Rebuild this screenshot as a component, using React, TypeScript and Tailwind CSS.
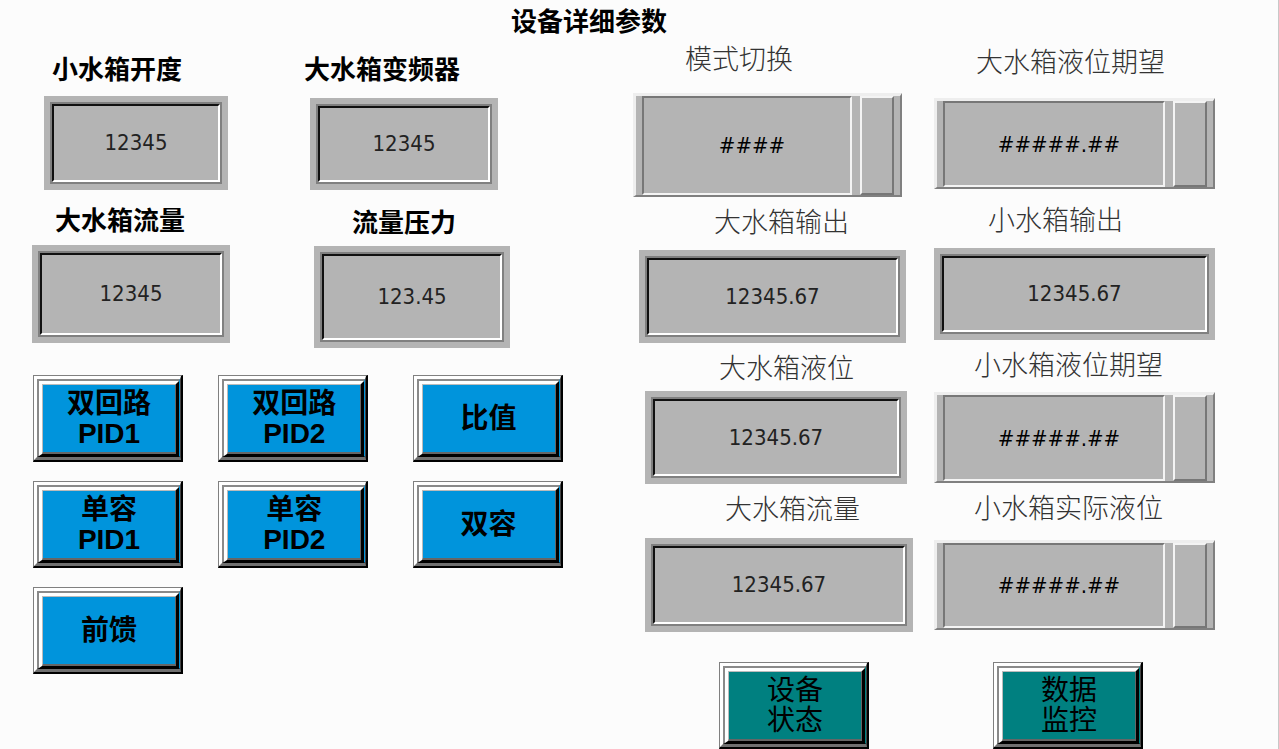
import { useId } from "react";

type FieldProps = {
  label: string;
  value: string;
  labelClass: string;
  boxClass: string;
};

const boldLabel = "text-[26px] font-bold text-black";
const lightLabel = "text-[27px] font-light text-[#333]";

function Display({ label, value, labelClass, boxClass }: FieldProps) {
  const id = useId();
  return (
    <div className="flex flex-col">
      <label htmlFor={id} className={`block h-8 whitespace-nowrap leading-8 ${labelClass}`}>
        {label}
      </label>
      <div className={`flex bg-[#b4b4b4] p-[6px] ${boxClass}`}>
        <div className="flex flex-1 border-2 border-[#808080]">
          <output
            id={id}
            className="flex flex-1 items-center justify-center border-2 border-t-[#111] border-r-white border-b-white border-l-[#111] text-[22px] leading-none text-[#222]"
          >
            {value}
          </output>
        </div>
      </div>
    </div>
  );
}

function Entry({ label, value, labelClass, boxClass }: FieldProps) {
  const id = useId();
  return (
    <div className="flex flex-col">
      <label htmlFor={id} className={`block h-8 whitespace-nowrap leading-8 ${labelClass}`}>
        {label}
      </label>
      <div
        className={`flex border-t-3 border-r-2 border-b-2 border-l-3 border-t-[#eee] border-r-[#808080] border-b-[#808080] border-l-[#eee] bg-[#b4b4b4] px-[6px] ${boxClass}`}
      >
        <input
          id={id}
          type="text"
          defaultValue={value}
          className="w-0 min-w-0 flex-1 border-2 border-t-[#777] border-r-[#f4f4f4] border-b-[#f4f4f4] border-l-[#777] bg-transparent pl-[10px] text-center text-[22px] text-black outline-none"
        />
        <button
          type="button"
          aria-label={label}
          className="ml-2 w-[34px] shrink-0 border-2 border-t-[#f4f4f4] border-r-[#777] border-b-[#777] border-l-[#f4f4f4]"
        />
      </div>
    </div>
  );
}

type PushButtonProps = { lines: string[]; tone: "blue" | "teal" };

const tones = {
  blue: { face: "bg-[#0094dc] font-bold", edge: "border-r-[#0094dc]" },
  teal: { face: "bg-[#008080] font-normal", edge: "border-r-[#008080]" },
};

function PushButton({ lines, tone }: PushButtonProps) {
  const { face, edge } = tones[tone];
  return (
    <button
      type="button"
      className="flex h-[87px] w-[150px] border-t border-r-2 border-b-2 border-l border-t-[#808080] border-r-black border-b-black border-l-[#808080]"
    >
      <span className="flex flex-1 self-stretch border-t-3 border-r border-b-3 border-l-3 border-t-white border-r-[#444] border-b-[#707070] border-l-white">
        <span className={`flex flex-1 border-t-2 border-r border-b border-l-2 border-t-[#8a8a8a] border-b-black border-l-[#8a8a8a] ${edge}`}>
          <span className="flex flex-1 border-t-3 border-r-3 border-b-2 border-l-3 border-t-white border-r-black border-b-black border-l-white">
            <span
              className={`flex flex-1 flex-col items-center justify-center border-t border-r border-b-2 border-l border-t-[#bbb] border-r-[#666] border-b-[#666] border-l-[#bbb] text-[28px] text-black ${face}`}
            >
              {lines.map((line) => (
                <span key={line} className="block h-[30px] whitespace-nowrap leading-[30px]">
                  {line}
                </span>
              ))}
            </span>
          </span>
        </span>
      </span>
    </button>
  );
}

const modes = [
  ["双回路", "PID1"],
  ["双回路", "PID2"],
  ["比值"],
  ["单容", "PID1"],
  ["单容", "PID2"],
  ["双容"],
  ["前馈"],
];

export default function App() {
  return (
    <main className="min-h-screen border-r border-[#c8c8c8] bg-[#fcfcfc] pr-[63px] pl-8 font-['DejaVu_Sans_Condensed','Noto_Sans_CJK_SC',sans-serif]">
      <h1 className="pl-[40.5%] text-[26px] leading-[44px] font-bold text-black">设备详细参数</h1>

      <div className="grid grid-cols-[minmax(0,601fr)_minmax(0,582fr)]">
        <section>
          <div className="grid grid-cols-[minmax(0,272fr)_minmax(0,329fr)] pt-[10px]">
            <div className="flex flex-col gap-[15px]">
              <Display label="小水箱开度" value="12345" labelClass={`pl-5 ${boldLabel}`} boxClass="mt-[10px] mr-[76px] ml-3 h-[94px]" />
              <Display label="大水箱流量" value="12345" labelClass={`pl-[23px] ${boldLabel}`} boxClass="mt-2 mr-[74px] h-[98px]" />
            </div>
            <div className="flex flex-col gap-[17px]">
              <Display label="大水箱变频器" value="12345" labelClass={boldLabel} boxClass="mt-3 mr-[135px] ml-[6px] h-[92px]" />
              <Display label="流量压力" value="123.45" labelClass={`pl-12 ${boldLabel}`} boxClass="mt-[7px] mr-[123px] ml-[10px] h-[102px]" />
            </div>
          </div>

          <div className="mt-[27px] grid grid-cols-[minmax(0,185fr)_minmax(0,194fr)_minmax(0,220fr)] gap-y-[19px] pl-px font-['Liberation_Sans','Noto_Sans_CJK_SC',sans-serif]">
            {modes.map((lines) => (
              <PushButton key={lines.join(" ")} lines={lines} tone="blue" />
            ))}
          </div>
        </section>

        <section className="grid grid-cols-[minmax(0,301fr)_minmax(0,281fr)]">
          <div className="flex flex-col gap-[10px]">
            <Entry label="模式切换" value="####" labelClass={`pl-[52px] ${lightLabel}`} boxClass="mt-[17px] mr-8 h-[104px]" />
            <Display label="大水箱输出" value="12345.67" labelClass={`pl-[81px] ${lightLabel}`} boxClass="mt-[11px] mr-7 ml-[6px] h-[93px]" />
            <Display label="大水箱液位" value="12345.67" labelClass={`pl-[86px] ${lightLabel}`} boxClass="mt-[6px] mr-[27px] ml-3 h-[93px]" />
            <Display label="大水箱流量" value="12345.67" labelClass={`pl-[92px] ${lightLabel}`} boxClass="mt-3 mr-[21px] ml-3 h-[94px]" />
            <div className="mt-5 pl-[86px]">
              <PushButton lines={["设备", "状态"]} tone="teal" />
            </div>
          </div>
          <div className="flex flex-col gap-[10px] pt-[3px]">
            <Entry label="大水箱液位期望" value="#####.##" labelClass={`pl-[42px] ${lightLabel}`} boxClass="mt-[19px] h-[91px]" />
            <div className="pt-[6px]">
              <Display label="小水箱输出" value="12345.67" labelClass={`pl-[54px] ${lightLabel}`} boxClass="mt-[11px] h-[92px]" />
            </div>
            <Entry label="小水箱液位期望" value="#####.##" labelClass={`pl-10 ${lightLabel}`} boxClass="mt-[10px] h-[91px]" />
            <Entry label="小水箱实际液位" value="#####.##" labelClass={`pl-10 ${lightLabel}`} boxClass="mt-[15px] h-[90px]" />
            <div className="mt-[22px] pl-[59px]">
              <PushButton lines={["数据", "监控"]} tone="teal" />
            </div>
          </div>
        </section>
      </div>
    </main>
  );
}
